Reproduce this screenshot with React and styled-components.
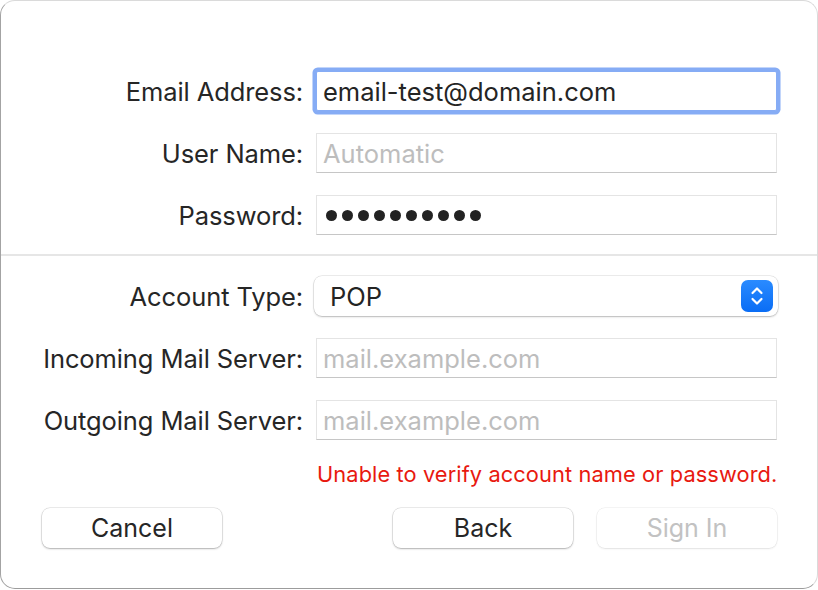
import React from "react";
import styled, { createGlobalStyle } from "styled-components";

const GlobalStyle = createGlobalStyle`
  html, body {
    margin: 0;
    padding: 0;
    background: #ffffff;
  }
  * {
    box-sizing: border-box;
  }
`;

const rows = [
  { label: "Email Address:", value: "email-test@domain.com", focused: true },
  { label: "User Name:", placeholder: "Automatic" },
  { label: "Password:", password: 10 },
];

const serverRows = [
  { label: "Incoming Mail Server:", placeholder: "mail.example.com" },
  { label: "Outgoing Mail Server:", placeholder: "mail.example.com" },
];

function Stepper() {
  return (
    <StepperBox>
      <svg width="16" height="22" viewBox="0 0 16 22" fill="none">
        <path d="M3.5 8 L8 3.5 L12.5 8" stroke="#fff" strokeWidth="2.2" strokeLinecap="round" strokeLinejoin="round" />
        <path d="M3.5 14 L8 18.5 L12.5 14" stroke="#fff" strokeWidth="2.2" strokeLinecap="round" strokeLinejoin="round" />
      </svg>
    </StepperBox>
  );
}

function FieldRow({ row }) {
  return (
    <>
      <Label>{row.label}</Label>
      <Field focused={row.focused}>
        {row.value && <Value>{row.value}</Value>}
        {row.placeholder && <Placeholder>{row.placeholder}</Placeholder>}
        {row.password && (
          <Dots>
            {Array.from({ length: row.password }).map((_, i) => (
              <Dot key={i} />
            ))}
          </Dots>
        )}
      </Field>
    </>
  );
}

export default function App() {
  return (
    <>
      <GlobalStyle />
      <Window>
        <Form>
          {rows.map((r) => (
            <FieldRow key={r.label} row={r} />
          ))}
        </Form>
        <Divider />
        <Form>
          <Label>Account Type:</Label>
          <Popup>
            <Value>POP</Value>
            <Stepper />
          </Popup>
          {serverRows.map((r) => (
            <FieldRow key={r.label} row={r} />
          ))}
        </Form>
        <ErrorRow>
          <ErrorText>Unable to verify account name or password.</ErrorText>
        </ErrorRow>
        <Footer>
          <Button>Cancel</Button>
          <Spacer />
          <Button>Back</Button>
          <Button disabled>Sign In</Button>
        </Footer>
      </Window>
    </>
  );
}

const Window = styled.div`
  width: 818px;
  height: 589px;
  background: #ffffff;
  border: 1px solid #dadada;
  border-left-color: #a3a3a3;
  border-bottom-color: #9c9c9c;
  border-radius: 15px;
  padding-top: 70px;
  font-family: Inter, "Noto Sans", sans-serif;
  color: #262626;
  display: flex;
  flex-direction: column;
`;

const Form = styled.div`
  display: grid;
  grid-template-columns: 1fr 461px;
  column-gap: 13px;
  row-gap: 22px;
  padding-right: 40px;
  align-items: center;
`;

const Label = styled.div`
  text-align: right;
  font-size: 25.5px;
  letter-spacing: -0.1px;
  color: #262626;
  white-space: nowrap;
`;

const Field = styled.div`
  height: 40px;
  display: flex;
  align-items: center;
  padding-left: 6px;
  background: #fff;
  border: 1px solid #e4e4e4;
  border-bottom: 1.5px solid #c6c6c6;
  box-shadow: ${(p) => (p.focused ? "0 0 0 3.5px #86acf5" : "none")};
  border-radius: ${(p) => (p.focused ? "2px" : "0")};
  ${(p) => p.focused && "border-color: #86acf5;"}
`;

const Value = styled.span`
  font-size: 25.5px;
  color: #242424;
`;

const Placeholder = styled.span`
  font-size: 25.5px;
  color: #bdbdbd;
`;

const Dots = styled.div`
  display: flex;
  gap: 5px;
  padding-left: 3px;
`;

const Dot = styled.span`
  width: 11px;
  height: 11px;
  border-radius: 50%;
  background: #222;
`;

const Divider = styled.div`
  height: 2px;
  background: #e6e6e6;
  margin: 19px 0 20px;
`;

const Popup = styled.div`
  height: 40px;
  margin-left: -2px;
  margin-right: -1px;
  display: flex;
  align-items: center;
  justify-content: space-between;
  padding: 0 5px 0 16px;
  background: #fff;
  border-radius: 8px;
  box-shadow: 0 0 0 0.5px rgba(0, 0, 0, 0.14), 0 1px 2px rgba(0, 0, 0, 0.22);
`;

const StepperBox = styled.div`
  width: 32px;
  height: 32px;
  border-radius: 7px;
  background: linear-gradient(#2a8bff, #0a6df5);
  display: flex;
  align-items: center;
  justify-content: center;
`;

const ErrorRow = styled.div`
  padding-left: 316px;
  margin-top: 22px;
  height: 24px;
  display: flex;
  align-items: center;
`;

const ErrorText = styled.div`
  font-size: 21.8px;
  color: #e8190f;
  letter-spacing: 0.1px;
`;

const Footer = styled.div`
  display: flex;
  gap: 24px;
  padding: 0 40px 0 41px;
  margin-top: 22px;
`;

const Spacer = styled.div`
  flex: 1;
`;

const Button = styled.button`
  width: 180px;
  height: 40px;
  border: none;
  border-radius: 8px;
  background: #fff;
  font-family: Inter, "Noto Sans", sans-serif;
  font-size: 25px;
  color: ${(p) => (p.disabled ? "#c2c2c2" : "#262626")};
  box-shadow: ${(p) =>
    p.disabled
      ? "0 0 0 0.5px rgba(0,0,0,0.08), 0 1px 2px rgba(0,0,0,0.08)"
      : "0 0 0 0.5px rgba(0,0,0,0.15), 0 1px 2px rgba(0,0,0,0.25)"};
  padding: 0;
`;
